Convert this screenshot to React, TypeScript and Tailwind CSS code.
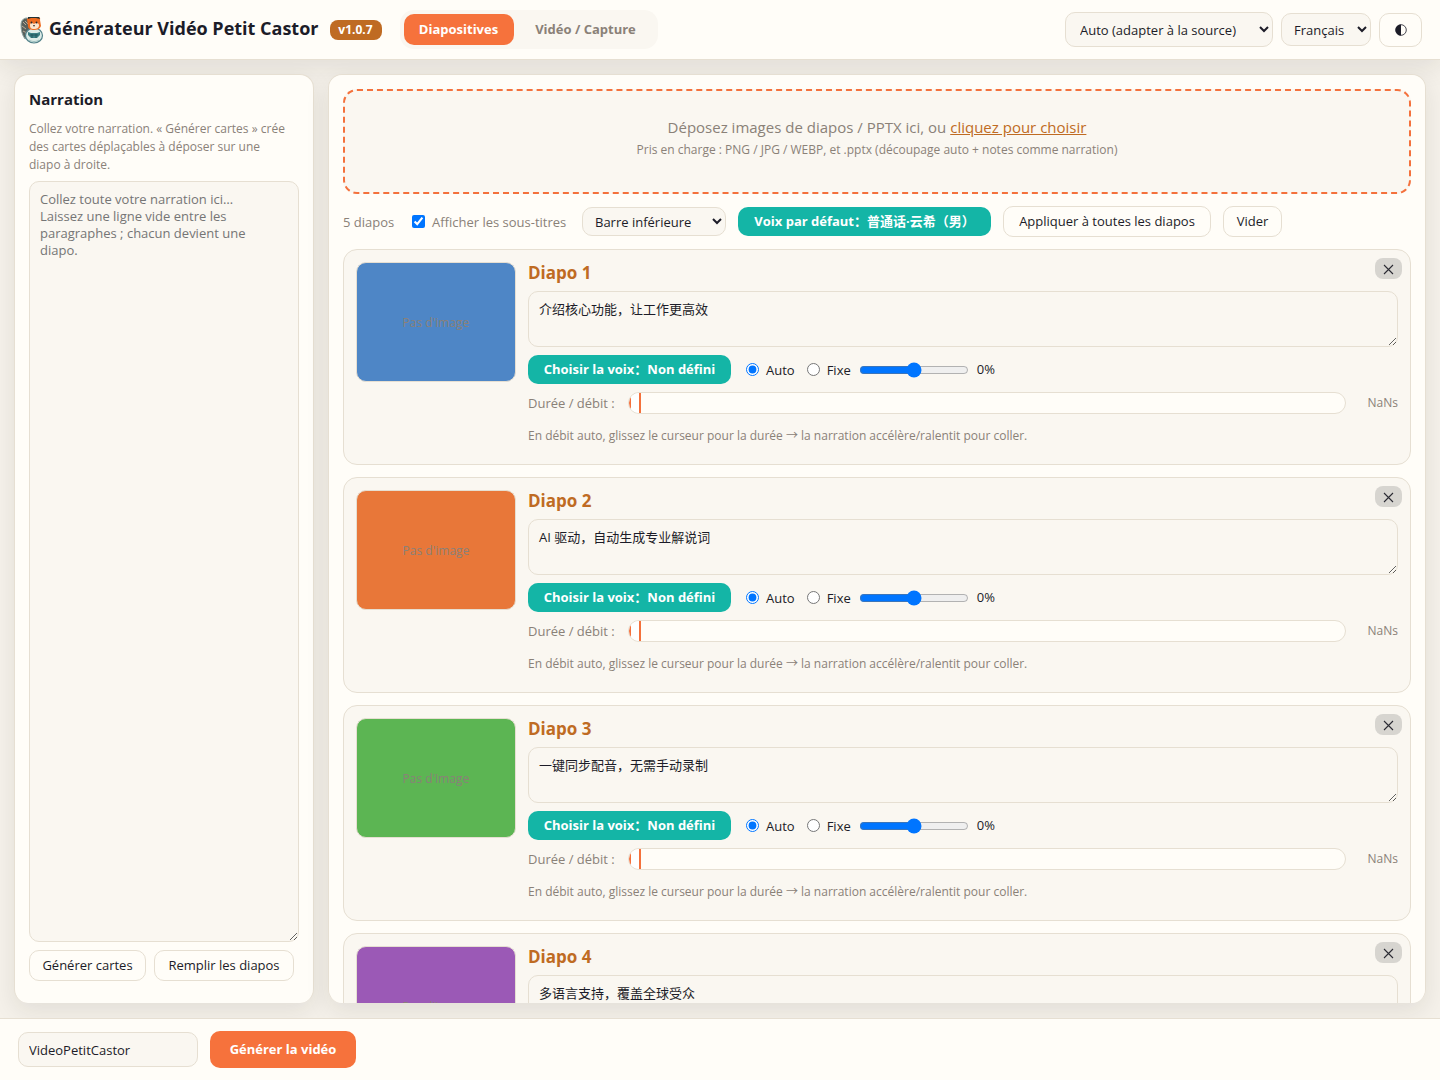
import React, { useState } from "react";

const slides = [
  { id: 1, color: "#4e86c6", text: "介绍核心功能，让工作更高效" },
  { id: 2, color: "#e87739", text: "AI 驱动，自动生成专业解说词" },
  { id: 3, color: "#5cb553", text: "一键同步配音，无需手动录制" },
  { id: 4, color: "#9b59b6", text: "多语言支持，覆盖全球受众" },
  { id: 5, color: "#e0a030", text: "立即开始使用" },
];

const outlineButton =
  "h-[31px] shrink-0 whitespace-nowrap rounded-[10px] border border-[#e6dfd2] bg-[#fffdf8] px-3 pt-px text-[13px]";
const voiceButton =
  "h-[29px] shrink-0 whitespace-nowrap rounded-[10px] bg-[#14b5a6] px-3 pt-px text-[13px] font-bold text-white";
const field = "rounded-[10px] border border-[#e6dfd2] bg-[#faf7f1]";

function BeaverLogo() {
  return (
    <svg width="24" height="28" viewBox="0 0 24 28" className="shrink-0" aria-hidden="true">
      <path d="M7 2C3 2 1 5 1 9c0 5 1 10 4 14l5-4V3z" fill="#59605c" stroke="#8fa5a3" />
      <path d="M3 6l3 3M2 10l4 3M3 15l4 2M5 5l3 3" stroke="#b9aa97" strokeWidth="1" />
      <ellipse cx="14" cy="19.500" rx="8.500" ry="7.500" fill="#dcebe7" stroke="#53828a" strokeWidth="1.2" />
      <path d="M7 3c1-2 3-1 4-1h5c2-2 5-1 4 2l1 6c-1 3-4 4-7 4s-6-1-6-4z" fill="#ee6b20" />
      <path d="M8 1h11l1 2-4-1h-5L8 3z" fill="#253334" />
      <path d="M10 9c0-2 2-3 4-1 2-2 5-1 5 1 0 3-2 4-5 4s-4-1-4-4z" fill="#fbe3cb" />
      <circle cx="11.500" cy="6.500" r=".9" fill="#23282b" />
      <circle cx="16.500" cy="6.500" r=".9" fill="#23282b" />
      <path d="M13 9h2l-1 2z" fill="#3e2a22" />
      <path d="M8 16l3 1h6l3-1v3l-3 3h-6l-3-3z" fill="#3c7f84" />
      <path d="M12 18v4M16 18v4M10 19h8" stroke="#1f5159" strokeWidth=".8" />
      <path d="M9 24c3 2 7 2 10 0" fill="none" stroke="#9cc0bf" />
    </svg>
  );
}

function SlideCard({ id, color, text }: { id: number; color: string; text: string }) {
  const [rate, setRate] = useState(0);
  return (
    <article className="relative flex h-[216px] shrink-0 gap-3 rounded-[14px] border border-[#e6dfd2] bg-[#faf7f1] p-3">
      <div
        className="flex h-[120px] w-40 shrink-0 items-center justify-center rounded-[10px] border border-[#e6dfd2] pt-0.5 text-xs text-[#8a8178]"
        style={{ backgroundColor: color }}
      >
        Pas d'image
      </div>
      <div className="flex min-w-0 flex-1 flex-col">
        <h3 className="mb-[7px] text-[17px] leading-[22px] font-bold text-[#bf6b23]">Diapo {id}</h3>
        <textarea
          aria-label={`Narration de la diapo ${id}`}
          defaultValue={text}
          className={`${field} h-14 w-full shrink-0 resize-y px-2.5 py-2 text-[13px] leading-[18px]`}
        />
        <div className="mt-2 flex h-[29px] shrink-0 items-center text-[13px]">
          <button className={`${voiceButton} min-w-[203px]`}>Choisir la voix：Non défini</button>
          <label className="ml-[15px] flex items-center gap-[7px]">
            <input type="radio" name={`mode-${id}`} defaultChecked className="size-[13px]" />
            <span className="pt-0.5">Auto</span>
          </label>
          <label className="ml-3 flex items-center gap-[7px]">
            <input type="radio" name={`mode-${id}`} className="size-[13px]" />
            <span className="pt-0.5">Fixe</span>
          </label>
          <input
            type="range"
            aria-label={`Débit de la diapo ${id}`}
            min={-50}
            max={50}
            value={rate}
            onChange={(e) => setRate(Number(e.target.value))}
            className="mr-2 ml-2 w-[110px]"
          />
          <span>{rate}%</span>
        </div>
        <div className="mt-2 flex h-[22px] shrink-0 items-center text-[#8a8178]">
          <span className="w-[100px] shrink-0 pt-0.5 text-[13px]">Durée / débit :</span>
          <div className="flex h-[22px] flex-1 overflow-hidden rounded-full border border-[#e6dfd2] bg-[#fffdf8]">
            <div className="w-3 border-x-2 border-[#f4713c] bg-white" />
          </div>
          <span className="w-[52px] shrink-0 text-right text-xs">NaNs</span>
        </div>
        <p className="mt-[13px] text-xs leading-[18px] text-[#8a8178]">
          En débit auto, glissez le curseur pour la durée → la narration accélère/ralentit pour coller.
        </p>
      </div>
      <button
        aria-label={`Supprimer la diapo ${id}`}
        className="absolute top-2 right-2 flex h-[21px] w-[27px] items-center justify-center rounded-lg bg-[#d7d5d0] pt-0.5"
      >
        <svg width="11" height="11" viewBox="0 0 11 11" aria-hidden="true">
          <path d="M1 1l9 9M10 1l-9 9" stroke="#2b2b33" strokeWidth="1.1" />
        </svg>
      </button>
    </article>
  );
}

export default function App() {
  return (
    <div className="flex h-screen flex-col overflow-hidden bg-[#f5f1ea] font-['Open_Sans','Noto_Sans_CJK_SC',sans-serif] text-[#1c1c28]">
      <header className="flex h-[60px] shrink-0 items-center border-b border-[#e6dfd2] bg-[#fffdf8] px-[18px] shadow-[0_8px_24px_rgba(30,30,20,0.09)]">
        <div className="flex items-center gap-[5px] pl-0.5">
          <BeaverLogo />
          <h1 className="pb-1 text-lg font-bold whitespace-nowrap">Générateur Vidéo Petit Castor</h1>
        </div>
        <span className="ml-[11px] min-w-[52px] rounded-lg bg-[#bf6b23] text-center text-xs leading-5 font-bold text-white">
          v1.0.7
        </span>
        <nav className="ml-[18px] flex gap-1 rounded-[14px] bg-[#faf7f1] p-1 text-[13px] font-bold">
          <button className="h-[31px] min-w-[110px] rounded-[10px] bg-[#f6723c] px-3.5 pt-px text-white">
            Diapositives
          </button>
          <button className="h-[31px] min-w-[136px] rounded-[10px] px-3.5 pt-px text-[#8a8178]">Vidéo / Capture</button>
        </nav>
        <div className="ml-auto flex items-center gap-2 text-[13px]">
          <select aria-label="Format" className={`${field} h-[35px] w-[208px] px-2.5`}>
            <option>Auto (adapter à la source)</option>
          </select>
          <select aria-label="Langue" className={`${field} h-[33px] w-[90px] px-2`}>
            <option>Français</option>
          </select>
          <button
            aria-label="Changer de thème"
            className="flex h-[34px] w-[43px] items-center justify-center rounded-[10px] border border-[#e6dfd2] bg-[#fffdf8]"
          >
            <svg width="12" height="12" viewBox="0 0 12 12" aria-hidden="true">
              <circle cx="6" cy="6" r="5.300" fill="none" stroke="#1c1c28" strokeWidth=".8" />
              <path d="M6 .5a5.500 5.500 0 0 0 0 11z" fill="#1c1c28" />
            </svg>
          </button>
        </div>
      </header>

      <main className="grid min-h-0 flex-1 grid-cols-[300px_minmax(0,1fr)] gap-3.5 px-3.5 pt-3.5 pb-[15px]">
        <aside className="flex min-h-0 flex-col rounded-[14px] border border-b-0 border-[#e6dfd2] bg-[#fffdf8] px-3.5 pt-3.5 pb-[22px] shadow-[0_8px_24px_rgba(30,30,20,0.09)]">
          <h2 className="mb-[11px] text-[15px] leading-5 font-bold">Narration</h2>
          <p className="mb-[7px] pr-1.5 text-xs leading-[18px] text-[#8a8178]">
            Collez votre narration. « Générer cartes » crée des cartes déplaçables à déposer sur une diapo à droite.
          </p>
          <textarea
            aria-label="Narration"
            placeholder={
              "Collez toute votre narration ici…\nLaissez une ligne vide entre les paragraphes ; chacun devient une diapo."
            }
            className={`${field} min-h-0 w-full flex-1 resize-y py-[9px] pr-5 pl-2.5 text-[13px] leading-[17px] placeholder:text-[#757575]`}
          />
          <div className="mt-2 flex gap-2">
            <button className={`${outlineButton} min-w-[117px]`}>Générer cartes</button>
            <button className={`${outlineButton} min-w-[140px]`}>Remplir les diapos</button>
          </div>
        </aside>

        <section className="flex min-h-0 flex-col overflow-y-auto rounded-[14px] border border-b-0 border-[#e6dfd2] bg-[#fffdf8] px-3.5 pt-3.5 shadow-[0_8px_24px_rgba(30,30,20,0.09)] [scrollbar-width:none]">
          <div className="flex h-[105px] shrink-0 flex-col items-center rounded-[14px] border-2 border-dashed border-[#f4713c] bg-[#faf7f1] pt-[25px] text-[#8a8178]">
            <p className="text-[15px] leading-[22px]">
              Déposez images de diapos / PPTX ici, ou{" "}
              <a href="#choisir" className="text-[#bf6b23] underline">
                cliquez pour choisir
              </a>
            </p>
            <p className="text-xs leading-6">
              Pris en charge : PNG / JPG / WEBP, et .pptx (découpage auto + notes comme narration)
            </p>
          </div>
          <div className="my-3 flex h-[31px] shrink-0 items-center gap-3 text-[13px]">
            <span className="min-w-[53px] pt-0.5 whitespace-nowrap text-[#8a8178]">5 diapos</span>
            <label className="ml-1 flex min-w-[158px] items-center gap-[7px] whitespace-nowrap text-[#8a8178]">
              <input type="checkbox" defaultChecked className="size-[13px]" />
              <span className="pt-0.5">Afficher les sous-titres</span>
            </label>
            <select aria-label="Position des sous-titres" className={`${field} h-[29px] w-36 px-2`}>
              <option>Barre inférieure</option>
            </select>
            <button className={`${voiceButton} min-w-[253px]`}>Voix par défaut：普通话·云希（男）</button>
            <button className={`${outlineButton} min-w-[208px]`}>Appliquer à toutes les diapos</button>
            <button className={`${outlineButton} min-w-[59px]`}>Vider</button>
          </div>
          <div className="flex shrink-0 flex-col gap-3 pb-3.5">
            {slides.map((s) => (
              <SlideCard key={s.id} {...s} />
            ))}
          </div>
        </section>
      </main>

      <footer className="flex h-[62px] shrink-0 items-center gap-3 border-t border-[#e6dfd2] bg-[#fffdf8] px-[18px] text-[13px]">
        <input
          aria-label="Nom du fichier"
          defaultValue="VideoPetitCastor"
          className={`${field} h-[35px] w-[180px] px-2.5`}
        />
        <button className="h-[37px] min-w-[146px] rounded-[10px] bg-[#f6723c] px-[18px] pt-px font-bold text-white">
          Générer la vidéo
        </button>
      </footer>
    </div>
  );
}
